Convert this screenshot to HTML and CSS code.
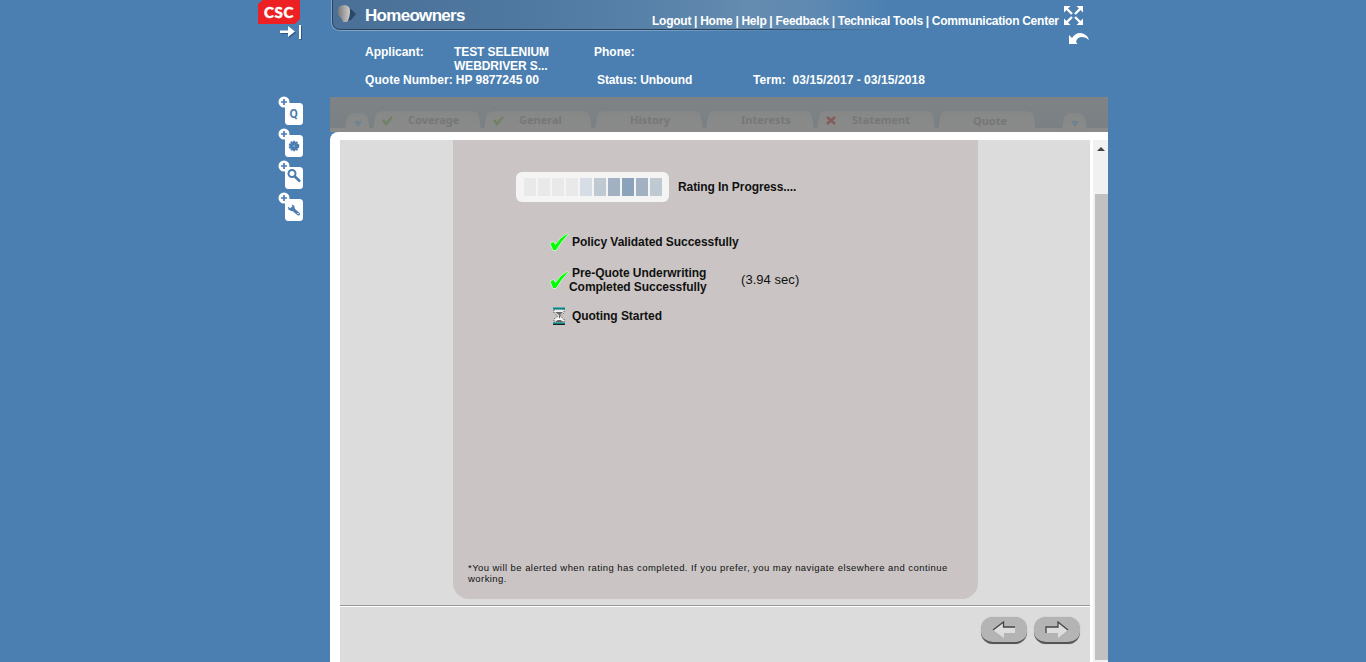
FILE: index.html
```
<!DOCTYPE html>
<html lang="en">
<head>
<meta charset="utf-8">
<title>Homeowners</title>
<link rel="stylesheet" href="styles.css">
</head>
<body>
<div class="page">
<aside class="rail">
  <div class="logo"><span>CSC</span></div>
  <svg class="collapse" width="24" height="18" viewBox="0 0 24 18"><g fill="#31557d" transform="translate(1 1)"><path d="M1 7.500h8V3l7 5.500-7 5.500v-4H1zM20 2h2v14h-2z"/></g><path fill="#fff" d="M1 7.500h8V3l7 5.500-7 5.500v-4H1zM20 2h2v14h-2z"/></svg>
  <nav class="tools">
    <svg width="26" height="30" viewBox="0 0 26 30"><rect x="7" y="7" width="18" height="22" rx="3.500" fill="#fff"/><text x="11.500" y="22" class="q">Q</text><circle cx="6" cy="6" r="5.500" fill="#fff"/><path d="M6 3v6M3 6h6" stroke="#4b7db0" stroke-width="1.700"/></svg>
    <svg width="26" height="30" viewBox="0 0 26 30"><rect x="7" y="7" width="18" height="22" rx="3.500" fill="#fff"/><circle cx="16" cy="18" r="4.300" fill="#4b7db0"/><circle cx="16" cy="18" r="4.600" fill="none" stroke="#4b7db0" stroke-width="1.400" stroke-dasharray="2 .9"/><circle cx="16" cy="18" r="1.200" fill="#7da2c8"/><circle cx="6" cy="6" r="5.500" fill="#fff"/><path d="M6 3v6M3 6h6" stroke="#4b7db0" stroke-width="1.700"/></svg>
    <svg width="26" height="30" viewBox="0 0 26 30"><rect x="7" y="7" width="18" height="22" rx="3.500" fill="#fff"/><circle cx="14" cy="13.500" r="3.500" fill="none" stroke="#4b7db0" stroke-width="2"/><path d="M16.800 16.500l4.500 4.300" stroke="#4b7db0" stroke-width="2.600" stroke-linecap="round"/><circle cx="6" cy="6" r="5.500" fill="#fff"/><path d="M6 3v6M3 6h6" stroke="#4b7db0" stroke-width="1.700"/></svg>
    <svg width="26" height="30" viewBox="0 0 26 30"><rect x="7" y="7" width="18" height="22" rx="3.500" fill="#fff"/><path d="M14 16.500l6.500 5.500" stroke="#4b7db0" stroke-width="3" stroke-linecap="round"/><path fill="#4b7db0" d="M13.500 12.500l2.600 1.100.8 3.600-3 2-3.400-1.400-.6-3.200 2.500 1.900 2-1.700z"/><circle cx="20" cy="21.500" r=".7" fill="#fff"/><circle cx="6" cy="6" r="5.500" fill="#fff"/><path d="M6 3v6M3 6h6" stroke="#4b7db0" stroke-width="1.700"/></svg>
  </nav>
</aside>
<main class="app">
  <header class="top">
    <svg class="banner" width="590" height="36" viewBox="0 0 590 36">
      <defs>
        <linearGradient id="sky"><stop offset="0" stop-color="#4a7097"/><stop offset=".3" stop-color="#4e779f"/><stop offset=".55" stop-color="#5781a8"/><stop offset=".75" stop-color="#648bb0"/><stop offset=".85" stop-color="#608ab2"/><stop offset="1" stop-color="#4b7fb1"/></linearGradient>
        <linearGradient id="edge" gradientUnits="userSpaceOnUse" x1="0" y1="0" x2="590" y2="0"><stop offset="0" stop-color="#2b4055"/><stop offset=".9" stop-color="#2b4055"/><stop offset="1" stop-color="#2b4055" stop-opacity="0"/></linearGradient>
        <linearGradient id="tail" gradientUnits="userSpaceOnUse" x1="0" y1="0" x2="590" y2="0"><stop offset=".7" stop-color="#2b4055"/><stop offset=".95" stop-color="#2b4055" stop-opacity="0"/></linearGradient>
        <linearGradient id="shine" gradientUnits="userSpaceOnUse" x1="0" y1="0" x2="500" y2="0"><stop offset="0" stop-color="#80a6cc"/><stop offset=".6" stop-color="#80a6cc"/><stop offset=".95" stop-color="#80a6cc" stop-opacity="0"/></linearGradient>
        <linearGradient id="face"><stop offset="0" stop-color="#777"/><stop offset="1" stop-color="#ccc"/></linearGradient>
      </defs>
      <path fill="url(#sky)" d="M2 0H560V29.500H10Q2 29 2 21z"/>
      <path d="M.5 0v22q0 8.500 9 8.500H500" fill="none" stroke="url(#shine)"/>
      <path d="M1.500 0v21q0 8.500 8 8.500H550" fill="none" stroke="url(#tail)"/>
      <path d="M14 10l6-1 5 5-5 6-5 1z" fill="#2b4868"/>
      <path d="M7 9q1-4 7-4 5 1 5 6 0 7-3 11l-4 0q-1-4-4-6-2-3-1-7z" fill="url(#face)"/>
    </svg>
    <h1>Homeowners</h1>
    <nav class="links"><a>Logout</a> | <a>Home</a> | <a>Help</a> | <a>Feedback</a> | <a>Technical Tools</a> | <a>Communication Center</a></nav>
    <svg class="corner" width="28" height="42" viewBox="0 0 28 42"><path fill="#fff" d="M2 4h6.500L2 10.500zM21 4h-6.500L21 10.500zM2 23h6.500L2 16.500zM21 23h-6.500L21 16.500z"/><path d="M4 6l6 6M19 6l-6 6M4 21l6-6M19 21l-6-6" stroke="#fff" stroke-width="2.400"/><path fill="#fff" d="M7 33l3 3q5-7 12-4 4 2 5 6-3-3-7-3-5 0-6 5l3 4H7z"/></svg>
  </header>
  <section class="facts">
    <b>Applicant:</b><span class="who">TEST SELENIUM<br>WEBDRIVER S...</span><b>Phone:</b><span></span>
    <div class="row"><span class="quote">Quote Number: HP 9877245 00</span><span class="status">Status: Unbound</span><span class="term">Term:&nbsp; 03/15/2017 - 03/15/2018</span></div>
  </section>
  <nav class="tabs">
    <div class="tab more m1"><i class="tri"></i></div>
    <div class="tab w108"><svg width="12" height="12"><path d="M1 6l3 4 6-7" fill="none" stroke="#6f8262" stroke-width="2.500"/></svg><span>Coverage</span></div>
    <div class="tab w108"><svg width="12" height="12"><path d="M1 6l3 4 6-7" fill="none" stroke="#6f8262" stroke-width="2.500"/></svg><span>General</span></div>
    <div class="tab w108"><span>History</span></div>
    <div class="tab w108"><span>Interests</span></div>
    <div class="tab w118"><svg width="12" height="12"><path d="M1 3l8 7M9 3l-8 7" fill="none" stroke="#845c5c" stroke-width="2.500"/></svg><span>Statement</span></div>
    <div class="tab w98"><span>Quote</span></div>
    <div class="tab more m2"><i class="tri"></i></div>
  </nav>
  <section class="frame">
    <div class="view">
      <div class="upper">
        <div class="card">
          <div class="progress">
            <div class="bar"><i></i><i></i><i></i><i></i><i class="c1"></i><i class="c2"></i><i class="c3"></i><i class="c4"></i><i class="c3"></i><i class="c2"></i></div>
            <span>Rating In Progress....</span>
          </div>
          <ul class="steps">
            <li class="s1"><svg width="22" height="20" viewBox="0 0 22 20"><path d="M2 11.500l3.500-2 2 3q5-8 12-11l1 .5Q13 10 8 18.500H5z" fill="#0f0" stroke="#fff" stroke-width=".6"/></svg><span class="in">Policy Validated Successfully</span></li>
            <li class="s2"><svg width="22" height="20" viewBox="0 0 22 20"><path d="M2 11.500l3.500-2 2 3q5-8 12-11l1 .5Q13 10 8 18.500H5z" fill="#0f0" stroke="#fff" stroke-width=".6"/></svg><span class="two"><span class="in">Pre-Quote Underwriting</span><br>Completed Successfully</span><em>(3.94 sec)</em></li>
            <li class="s3"><svg width="22" height="18" viewBox="0 0 22 18"><path d="M6 2h10v4l-4 3 4 3v3H6v-3l4-3-4-3z" fill="#eee" stroke="#555" stroke-dasharray="1 1"/><path d="M7 5h8l-3 3v4l3 3H7l4-3V8z" fill="#666"/><path d="M8 13h6l-3-2z" fill="#fff"/><path d="M5 1.500h12M5 16.500h12" stroke="#088" stroke-width="2"/><path d="M5 17.500h12" stroke="#222"/></svg><span class="in">Quoting Started</span></li>
          </ul>
          <p class="note">*You will be alerted when rating has completed. If you prefer, you may navigate elsewhere and continue<br>working.</p>
        </div>
      </div>
      <footer class="actions">
        <button><svg width="24" height="18" viewBox="0 0 24 18"><path d="M1 9l11-8v5h11v6H12v5z" fill="#ddd"/><path d="M1 9l10.500-8v5H23" fill="none" stroke="#444" stroke-width="1.300"/></svg></button>
        <button><svg width="24" height="18" viewBox="0 0 24 18"><path d="M23 9L13 1v5H1v6h12v5z" fill="#ddd"/><path d="M1 12V6h12V1l10 8" fill="none" stroke="#444" stroke-width="1.300"/></svg></button>
      </footer>
    </div>
    <div class="scroll"><div class="arrow"></div><div class="thumb"></div></div>
  </section>
</main>
</div>
</body>
</html>
```
FILE: styles.css
```
* { box-sizing: border-box; }
body { margin: 0; background: #4b7fb1; font: bold 12px/14px "Liberation Sans", Arial, sans-serif; color: #fff; overflow: hidden; }
.page { display: flex; padding-left: 258px; height: 662px; }
.rail { width: 72px; display: flex; flex-direction: column; }
.logo { width: 42px; height: 24px; background: #ed2024; font: 900 15px/24px Lato, sans-serif; text-align: center; clip-path: polygon(5px 0, 100% 0, 100% 19px, 37px 100%, 0 100%, 0 4px); }
.logo span { display: block; letter-spacing: .6px; -webkit-text-stroke: .4px #fff; }
.collapse { margin: -1px 0 0 21px; }
.tools { display: flex; flex-direction: column; gap: 2px; margin: 55px 0 0 20px; }
.q { font: bold 12px Roboto, sans-serif; fill: #4b7db0; }
.app { width: 778px; display: flex; flex-direction: column; }
.top { display: grid; grid-template-columns: 35px 287px 410px 1fr; height: 45px; }
.banner { grid-area: 1 / 1 / 2 / 5; margin-left: 1px; }
h1 { grid-area: 1 / 2; margin: 6px 0 0; font-size: 17px; line-height: 19px; letter-spacing: -.7px; }
.links { grid-area: 1 / 3; margin-top: 14px; white-space: nowrap; word-spacing: -.2px; letter-spacing: -.24px; z-index: 1; }
.corner { grid-area: 1 / 4; margin-top: 2px; }
.facts { height: 52px; padding-left: 35px; display: grid; grid-template-columns: 89px 140px 159px 1fr; grid-template-rows: 28px 14px; }
.row { grid-column: 1 / 5; display: grid; grid-template-columns: 232px 156px 1fr; }
.who { letter-spacing: -.08px; }
.quote { letter-spacing: .05px; word-spacing: -.3px; }
.status { letter-spacing: -.1px; }
.term { letter-spacing: .1px; word-spacing: -.2px; }
.tabs { height: 35px; flex: none; background: linear-gradient(#7e8386, #7a8083 31px, #8a8a8a 31px); display: flex; align-items: flex-end; padding: 0 0 3px 15px; gap: 3px; }
.tab { height: 18px; background: linear-gradient(#868888, #8a8a8a); border: 1px solid #848787; border-bottom: 0; border-radius: 9px 9px 0 0; display: grid; grid-template-columns: 22px 1fr; align-items: center; padding: 0 0 1px 12px; font: bold 11px/16px "Noto Sans", sans-serif; color: #777; clip-path: polygon(0 100%, 3px 0, calc(100% - 3px) 0, 100% 100%); }
.tab span { grid-column: 2; }
.tab svg { grid-column: 1; grid-row: 1; margin-left: -4px; }
.w108 { width: 108px; }
.w118 { width: 118px; }
.w98 { width: 98px; height: 20px; margin-bottom: -2px; padding-bottom: 1px; }
.more { width: 25px; height: 16px; padding: 2px 0 0 8px; display: block; }
.m2 { margin-left: 23px; }
.tri { display: block; margin-top: 5px; border: 4px solid transparent; border-top: 6px solid #6f8290; width: 0; }
.frame { flex: 1; min-height: 0; background: #fff; border-radius: 8px 0 0 0; padding-left: 10px; display: flex; }
.view { width: 750px; margin-top: 8px; background: #dcdcdc; margin-right: 3px; }
.upper { height: 466px; border-bottom: 1px solid #999; padding-left: 113px; }
.card { width: 525px; height: 459px; background: #cac5c4; border-radius: 0 0 16px 16px; color: #111; padding-top: 32px; display: flex; flex-direction: column; }
.progress { display: flex; align-items: center; gap: 9px; padding-left: 63px; letter-spacing: -.08px; }
.bar { width: 153px; height: 30px; background: #f4f4f4; border-radius: 6px; display: flex; gap: 2px; padding: 6px 7px 6px 8px; }
.bar i { width: 12px; height: 18px; background: #e9e9e9; }
.bar .c1 { background: #d6dde4; }
.bar .c2 { background: #bfc9d2; }
.bar .c3 { background: #a1b1c1; }
.bar .c4 { background: #8ba2bb; }
.steps { list-style: none; margin: 30px 0 0; padding: 0 0 0 95px; letter-spacing: -.05px; }
.steps li { display: flex; align-items: center; }
.steps svg { margin-right: -1px; }
.in { padding-left: 3px; }
.s1 { height: 20px; }
.s2 { height: 32px; margin-top: 12px; }
.s3 { height: 20px; margin-top: 10px; }
.two { width: 172px; }
em { font: 13px/16px "Liberation Sans", sans-serif; letter-spacing: .05px; }
.note { margin: auto 0 15px 15px; font: 9.5px/11px "Liberation Sans", sans-serif; letter-spacing: .44px; white-space: nowrap; }
.actions { border-top: 1px solid #fff; padding: 10px 10px 0; display: flex; justify-content: flex-end; gap: 7px; }
button { width: 46px; height: 27px; border: 0; border-bottom: 2px solid #555; border-radius: 12px; background: #b4b4b4; padding: 0; display: grid; place-items: center; box-shadow: 0 0 1px #999; }
.scroll { width: 15px; background: #f1f1f1; margin-top: 8px; }
.arrow { width: 0; margin: 7px 0 0 4px; border: 4px solid transparent; border-top: 0; border-bottom: 4px solid #444; }
.thumb { margin: 43px 0 0 2px; height: 466px; background: #c1c1c1; }
```
